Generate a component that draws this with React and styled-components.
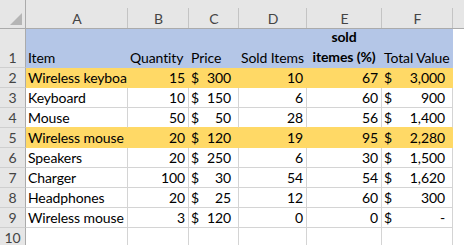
import React from "react";
import styled, { createGlobalStyle } from "styled-components";

const GlobalStyle = createGlobalStyle`
  html, body {
    margin: 0;
    padding: 0;
    background: #ffffff;
  }
  body {
    font-family: Lato, "Liberation Sans", sans-serif;
    font-size: 14px;
    letter-spacing: -0.1px;
    color: #000;
    overflow: hidden;
  }
`;

const GRID = "#d4d4d4";
const HEAD_BG = "#e6e6e6";
const HEAD_LINE = "#ababab";

const Sheet = styled.div`
  display: grid;
  grid-template-columns: 26px 102px 61px 50px 68px 75px 71px 1fr;
  grid-template-rows: 29px 39px repeat(9, 20px);
  width: 464px;
  height: 245px;
  overflow: hidden;
`;

const Corner = styled.div`
  position: relative;
  background: ${HEAD_BG};
  border-bottom: 1px solid ${HEAD_LINE};
  border-right: 1px solid ${HEAD_LINE};
  box-sizing: border-box;
  svg {
    position: absolute;
    right: 3px;
    bottom: 3px;
  }
`;

const ColHead = styled.div`
  position: relative;
  box-sizing: border-box;
  background: ${HEAD_BG};
  border-bottom: 1px solid ${HEAD_LINE};
  padding-top: 8px;
  display: flex;
  align-items: center;
  justify-content: center;
  color: #444;
  &::after {
    content: "";
    position: absolute;
    right: 0;
    top: 8px;
    bottom: 0;
    width: 1px;
    background: ${(p) => (p.$last ? "transparent" : "#c4c4c4")};
  }
`;

const RowHead = styled.div`
  box-sizing: border-box;
  background: ${HEAD_BG};
  border-right: 1px solid ${HEAD_LINE};
  border-bottom: 1px solid #cfcfcf;
  display: flex;
  align-items: flex-end;
  justify-content: center;
  color: #444;
  line-height: 19px;
`;

const Cell = styled.div`
  box-sizing: border-box;
  background: ${(p) => p.$fill || "#fff"};
  border-right: 1px solid ${(p) => p.$fill || GRID};
  border-bottom: 1px solid ${(p) => p.$edge || p.$fill || GRID};
  display: flex;
  align-items: flex-end;
  justify-content: ${(p) => (p.$num ? "flex-end" : "flex-start")};
  padding: 0 ${(p) => (p.$num ? "3px" : "2px")};
  line-height: 19px;
  white-space: nowrap;
  overflow: hidden;
  font-weight: ${(p) => (p.$bold ? 700 : 400)};
`;

const Wrapped = styled(Cell)`
  flex-direction: column;
  align-items: center;
  justify-content: flex-end;
  line-height: 20px;
`;

const Money = styled(Cell)`
  justify-content: space-between;
  padding: 0 7px 0 2px;
`;

const Blank = styled.div`
  background: #fff;
`;

const BLUE = "#b4c6e7";
const YELLOW = "#ffd966";

const rows = [
  { item: "Wireless keyboard", qty: 15, price: 300, sold: 10, pct: 67, total: "3,000", fill: YELLOW },
  { item: "Keyboard", qty: 10, price: 150, sold: 6, pct: 60, total: "900" },
  { item: "Mouse", qty: 50, price: 50, sold: 28, pct: 56, total: "1,400" },
  { item: "Wireless mouse", qty: 20, price: 120, sold: 19, pct: 95, total: "2,280", fill: YELLOW },
  { item: "Speakers", qty: 20, price: 250, sold: 6, pct: 30, total: "1,500" },
  { item: "Charger", qty: 100, price: 30, sold: 54, pct: 54, total: "1,620" },
  { item: "Headphones", qty: 20, price: 25, sold: 12, pct: 60, total: "300" },
  { item: "Wireless mouse", qty: 3, price: 120, sold: 0, pct: 0, total: "-" },
];

const letters = ["A", "B", "C", "D", "E", "F"];

export default function App() {
  return (
    <>
      <GlobalStyle />
      <Sheet>
        <Corner>
          <svg width="12" height="12" viewBox="0 0 12 12">
            <polygon points="12,0 12,12 0,12" fill="#b5b5b5" />
          </svg>
        </Corner>
        {letters.map((l) => (
          <ColHead key={l}>{l}</ColHead>
        ))}
        <ColHead $last />

        <RowHead>1</RowHead>
        <Cell $fill={BLUE}>Item</Cell>
        <Cell $fill={BLUE}>Quantity</Cell>
        <Cell $fill={BLUE}>Price</Cell>
        <Cell $fill={BLUE}>Sold Items</Cell>
        <Wrapped $fill={BLUE} $bold>
          <span>sold</span>
          <span>itemes (%)</span>
        </Wrapped>
        <Cell $fill={BLUE}>Total Value</Cell>
        <Blank />

        {rows.map((r, i) => {
          const edge = rows[i + 1] && rows[i + 1].fill;
          return (
            <React.Fragment key={i}>
              <RowHead>{i + 2}</RowHead>
              <Cell $fill={r.fill} $edge={edge}>{r.item}</Cell>
              <Cell $num $fill={r.fill} $edge={edge}>{r.qty}</Cell>
              <Money $fill={r.fill} $edge={edge}>
                <span>$</span>
                <span>{r.price}</span>
              </Money>
              <Cell $num $fill={r.fill} $edge={edge}>{r.sold}</Cell>
              <Cell $num $fill={r.fill} $edge={edge}>{r.pct}</Cell>
              <Money $fill={r.fill} $edge={edge}>
                <span>$</span>
                <span>{r.total}</span>
              </Money>
              <Blank />
            </React.Fragment>
          );
        })}

        <RowHead>10</RowHead>
        {letters.map((l) => (
          <Cell key={l} />
        ))}
        <Blank />
      </Sheet>
    </>
  );
}
